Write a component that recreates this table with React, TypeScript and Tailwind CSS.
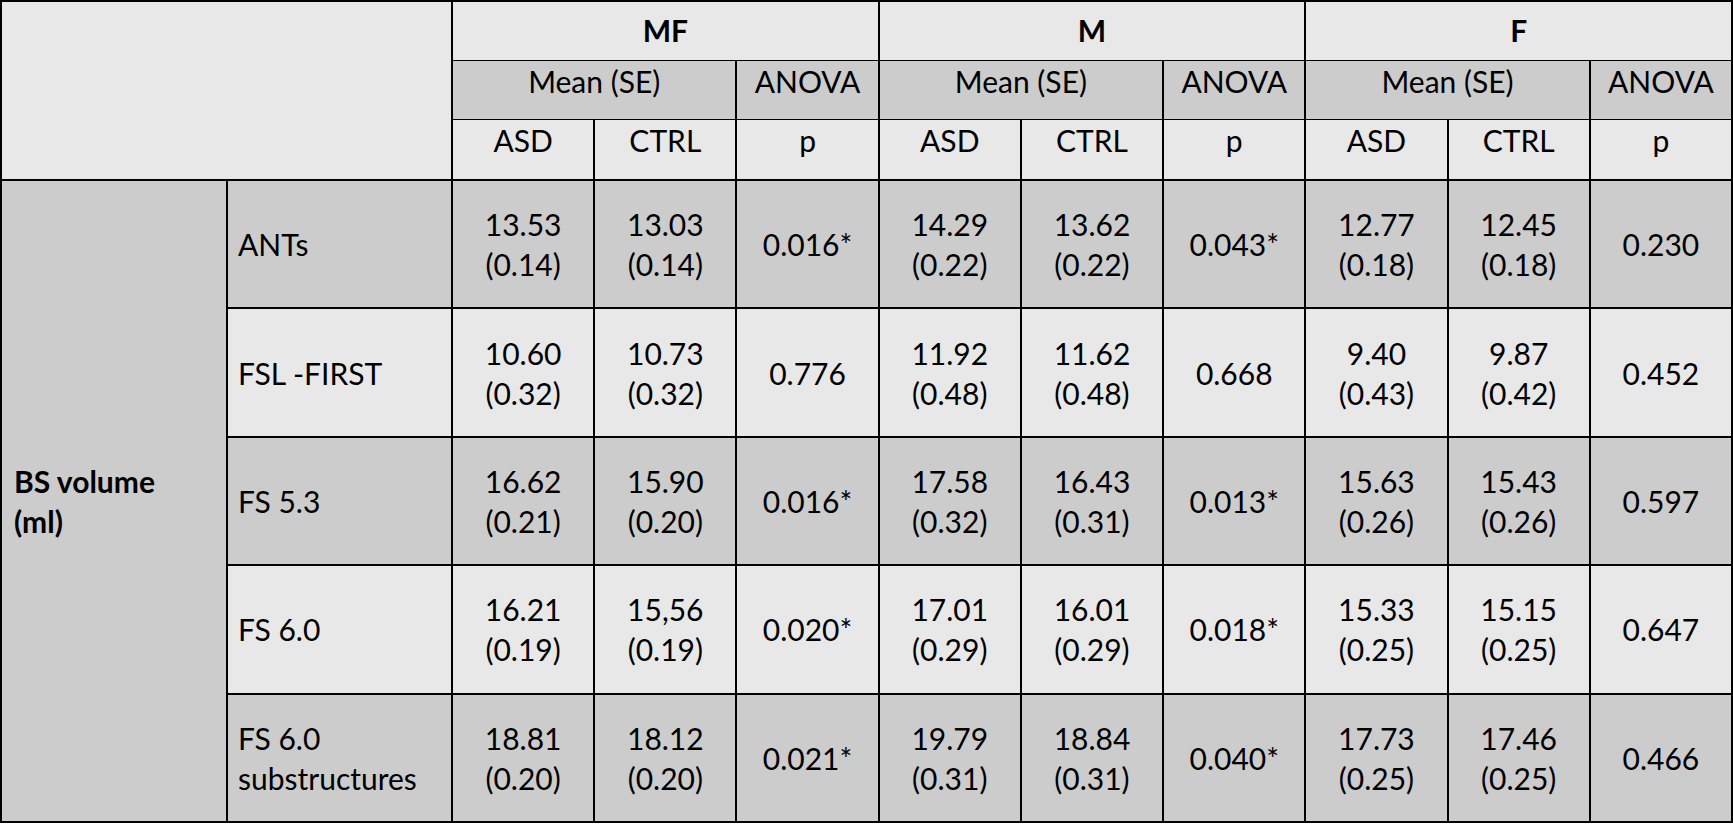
import React from "react";

interface DataRow {
    label: string[]
    values: string[][]
    dark: boolean
}

const rows: DataRow[] = [
    {
        label: ["ANTs"],
        dark: true,
        values: [["13.53", "(0.14)"], ["13.03", "(0.14)"], ["0.016*"], ["14.29", "(0.22)"], ["13.62", "(0.22)"], ["0.043*"], ["12.77", "(0.18)"], ["12.45", "(0.18)"], ["0.230"]],
    },
    {
        label: ["FSL -FIRST"],
        dark: false,
        values: [["10.60", "(0.32)"], ["10.73", "(0.32)"], ["0.776"], ["11.92", "(0.48)"], ["11.62", "(0.48)"], ["0.668"], ["9.40", "(0.43)"], ["9.87", "(0.42)"], ["0.452"]],
    },
    {
        label: ["FS 5.3"],
        dark: true,
        values: [["16.62", "(0.21)"], ["15.90", "(0.20)"], ["0.016*"], ["17.58", "(0.32)"], ["16.43", "(0.31)"], ["0.013*"], ["15.63", "(0.26)"], ["15.43", "(0.26)"], ["0.597"]],
    },
    {
        label: ["FS 6.0"],
        dark: false,
        values: [["16.21", "(0.19)"], ["15,56", "(0.19)"], ["0.020*"], ["17.01", "(0.29)"], ["16.01", "(0.29)"], ["0.018*"], ["15.33", "(0.25)"], ["15.15", "(0.25)"], ["0.647"]],
    },
    {
        label: ["FS 6.0", "substructures"],
        dark: true,
        values: [["18.81", "(0.20)"], ["18.12", "(0.20)"], ["0.021*"], ["19.79", "(0.31)"], ["18.84", "(0.31)"], ["0.040*"], ["17.73", "(0.25)"], ["17.46", "(0.25)"], ["0.466"]],
    },
]

const groups = ["MF", "M", "F"]

export default function App() {
    return (
        <div
            className="w-[1733px] h-[825px] bg-white text-black text-[30px] leading-[40px]"
            style={{fontFamily: "Lato, 'Open Sans', sans-serif"}}
        >
            <div className="grid h-[823px] grid-cols-[224px_223px_repeat(9,1fr)] grid-rows-[58px_57px_58px_repeat(5,1fr)] gap-[2px] bg-black p-[2px]">
                <div className="col-span-2 row-span-3 bg-[#e8e8e8]"/>

                {groups.map((g) => (
                    <div key={g} className="col-span-3 flex items-center justify-center bg-[#e8e8e8] pb-0.5 font-bold">
                        {g}
                    </div>
                ))}

                {groups.map((g) => (
                    <React.Fragment key={g + "-sub"}>
                        <div className="col-span-2 flex justify-center bg-[#cccccc] -mt-px">Mean (SE)</div>
                        <div className="flex justify-center bg-[#cccccc] -mt-px">ANOVA</div>
                    </React.Fragment>
                ))}

                {groups.map((g) => (
                    <React.Fragment key={g + "-cols"}>
                        <div className="flex justify-center bg-[#e8e8e8] -mt-px">ASD</div>
                        <div className="flex justify-center bg-[#e8e8e8] -mt-px">CTRL</div>
                        <div className="flex justify-center bg-[#e8e8e8] -mt-px">p</div>
                    </React.Fragment>
                ))}

                <div className="row-span-5 flex flex-col justify-center bg-[#cccccc] pl-3 font-bold">
                    <span>BS volume</span>
                    <span>(ml)</span>
                </div>

                {rows.map((row) => (
                    <React.Fragment key={row.label.join(" ")}>
                        <div className={`flex flex-col justify-center pl-2.5 ${row.dark ? "bg-[#cccccc]" : "bg-[#e8e8e8]"}`}>
                            {row.label.map((l) => (
                                <span key={l}>{l}</span>
                            ))}
                        </div>
                        {row.values.map((v, i) => (
                            <div
                                key={i}
                                className={`flex flex-col items-center justify-center ${row.dark ? "bg-[#cccccc]" : "bg-[#e8e8e8]"}`}
                            >
                                {v.map((line, j) => (
                                    <span key={j}>{line}</span>
                                ))}
                            </div>
                        ))}
                    </React.Fragment>
                ))}
            </div>
        </div>
    )
}
